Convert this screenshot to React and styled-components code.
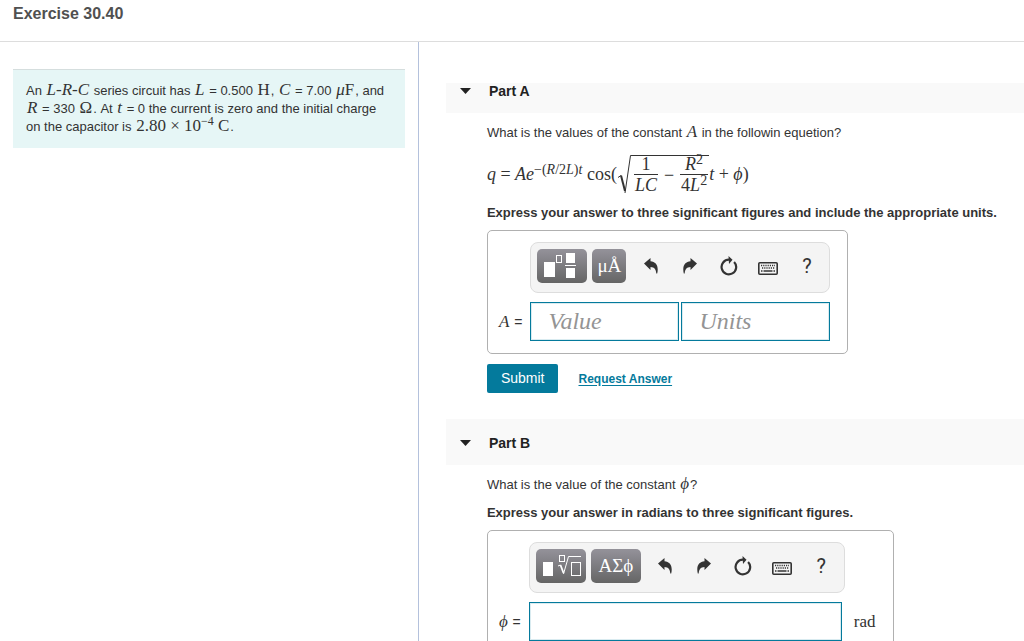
import React from "react";
import styled, { createGlobalStyle } from "styled-components";

const GlobalStyle = createGlobalStyle`
	*, *::before, *::after {
		box-sizing: border-box;
	}
	body {
		margin: 0;
		overflow: hidden;
		background: #fff;
		color: #333;
		font: 13px/18px "Liberation Sans", Arial, sans-serif;
	}
	h1, h2, p {
		margin: 0;
	}
	button, input {
		font: inherit;
		color: inherit;
	}
`;

const Page = styled.div`
	display: flex;
	flex-direction: column;
	height: 100vh;
`;

const PageHeader = styled.header`
	padding: 4px 13px 17px;
	border-bottom: 1px solid #ddd;
`;

const PageTitle = styled.h1`
	font-size: 16px;
	line-height: 20px;
	color: #505050;
`;

const Columns = styled.div`
	display: grid;
	grid-template-columns: minmax(0, 9fr) minmax(0, 13fr);
	flex: 1;
	min-height: 0;
`;

const ProblemPane = styled.section`
	padding: 27px 13px 0;
	border-right: 1px solid #b4c1dc;
`;

const ProblemText = styled.p`
	padding: 12px 13px;
	border-top: 1px solid #d5dede;
	background: #e6f6f6;
`;

const PartsPane = styled.main`
	min-width: 0;
	padding: 41px 0 0 27px;
	overflow: hidden;
`;

const PartHeader = styled.div`
	display: flex;
	align-items: center;
	gap: 18px;
	padding: ${(props) => (props.$first ? "0 14px 14px" : "16px 14px 14px")};
	background: #f9f9f9;
`;

const ToggleButton = styled.button`
	display: flex;
	padding: 0;
	border: 0;
	background: none;
	color: #222;
`;

const PartTitle = styled.h2`
	font-size: 14px;
	line-height: 16px;
	color: #222;
`;

const PartBody = styled.div`
	display: flex;
	flex-direction: column;
	align-items: flex-start;
	padding: 11px 0 26px 41px;
`;

const Instruction = styled.p`
	margin: 10px 0 8px;
	font-weight: bold;
	white-space: nowrap;
`;

const Math = styled.span`
	margin: 0 1px;
	font-family: "Liberation Serif", "Times New Roman", serif;
	font-size: 17px;
	line-height: 16px;
	white-space: nowrap;
	sup {
		font-size: 12px;
		line-height: 0;
		vertical-align: 6px;
	}
`;

const NoWrap = styled.span`
	white-space: nowrap;
`;

const Formula = styled.div`
	display: flex;
	align-items: center;
	margin-top: 12px;
	height: 40px;
	font-family: "Liberation Serif", "Times New Roman", serif;
	font-size: 18px;
	line-height: 20px;
	white-space: pre;
	sup {
		font-size: 14px;
		line-height: 0;
		vertical-align: 6px;
	}
`;

const RadicalSign = styled.svg`
	display: block;
	width: 14px;
	height: 39px;
`;

const Radicand = styled.span`
	display: flex;
	align-items: center;
	gap: 6px;
	height: 39px;
	padding: 0 1px 0 3px;
	border-top: 1px solid #333;
`;

const Fraction = styled.span`
	display: flex;
	flex-direction: column;
	text-align: center;
	span {
		padding: 0 1px;
	}
	span:first-child {
		border-bottom: 1px solid #333;
	}
`;

const AnswerBox = styled.form`
	display: grid;
	grid-template-columns: auto auto auto;
	align-items: center;
	row-gap: 9px;
	padding: 11px 17px 12px 10px;
	border: 1px solid #b0b0b0;
	border-radius: 5px;
`;

const Toolbar = styled.div`
	display: flex;
	align-items: center;
	grid-column: 2;
	height: 51px;
	padding: 0 3px 3px 6px;
	border: 1px solid #ddd;
	border-radius: 8px;
	background: #f4f4f4;
`;

const PaletteButton = styled.button`
	display: flex;
	align-items: center;
	justify-content: center;
	width: ${(props) => (props.$narrow ? "34px" : "50px")};
	height: 34px;
	margin-right: 5px;
	padding: 0;
	border: 0;
	border-radius: 5px;
	background: linear-gradient(#94929a, #656565);
	color: #fff;
	font-family: "Liberation Serif", "Times New Roman", serif;
	font-size: 19px;
`;

const IconGroup = styled.div`
	display: flex;
`;

const IconButton = styled.button`
	display: flex;
	align-items: center;
	justify-content: center;
	width: 39px;
	height: 34px;
	padding: 0;
	border: 0;
	background: none;
	color: #333;
	font-family: Roboto, sans-serif;
	font-size: 20px;
`;

const AnswerLabel = styled.label`
	grid-column: 1;
	margin-right: 8px;
	font-size: 14px;
	white-space: nowrap;
`;

const Fields = styled.div`
	display: flex;
	gap: 2px;
`;

const Unit = styled(Math)`
	margin-left: 9px;
	margin-right: 0;
`;

const AnswerInput = styled.input`
	width: ${(props) => (props.$wide ? "313px" : "149px")};
	height: 39px;
	padding: 0 17px;
	border: 1px solid #047a9c;
	box-shadow: inset 0 0 0 1px #d9ebf0;
	background: #fff;
	font-family: "Liberation Serif", "Times New Roman", serif;
	font-size: 24px;
	&::placeholder {
		color: #949494;
		font-style: italic;
		opacity: 1;
	}
`;

const Actions = styled.div`
	display: flex;
	align-items: center;
	gap: 20px;
	margin-top: 10px;
`;

const SubmitButton = styled.button`
	padding: 5px 14px 6px;
	border: 0;
	border-radius: 2px;
	background: #047a9c;
	color: #fff;
	font-size: 14px;
`;

const RequestLink = styled.a`
	color: #047a9c;
	font-size: 12px;
	font-weight: bold;
	text-underline-offset: 2px;
`;

const UndoIcon = ({ flipped }) => (
	<svg width="14" height="16" viewBox="0 0 14 16" fill="currentColor">
		<path
			transform={flipped ? "matrix(-1 0 0 1 14 0)" : undefined}
			d="M0 5.500 6.500 0V3.200C12 3.500 15 8 13.200 15.500H12.300C12 11.500 10.500 9.300 6.500 9.100V12Z"
		/>
	</svg>
);

const ResetIcon = () => (
	<svg width="18" height="20" viewBox="0 0 18 20" fill="none">
		<path
			d="M14.100 5.900A7.300 7.300 0 1 1 9 3.700"
			stroke="currentColor"
			strokeWidth="2.200"
		/>
		<path d="M8.500 0 12.500 3.800 9 8Z" fill="currentColor" />
	</svg>
);

const KeyboardIcon = () => (
	<svg width="20" height="18" viewBox="0 0 20 18" fill="none" stroke="currentColor">
		<rect x=".8" y="5.800" width="18.400" height="11.400" rx="1" strokeWidth="1.600" />
		<path d="M3 8.500H17M4 11H17" strokeWidth="1.400" strokeDasharray="1.200 1" />
		<path d="M3 14H4.500M5.500 14H14.500M15.500 14H17" strokeWidth="1.600" />
	</svg>
);

const TemplatesIcon = () => (
	<svg width="36" height="30" viewBox="0 0 36 30" fill="#fff">
		<rect x="0" y="11" width="11" height="15" />
		<rect x="12.500" y="4.500" width="5" height="7" fill="none" stroke="#fff" />
		<rect x="22" y="2" width="9" height="10" />
		<rect x="21" y="14" width="11" height="1" />
		<rect x="22" y="17" width="9" height="10" />
	</svg>
);

const RootIcon = () => (
	<svg width="40" height="26" viewBox="0 0 40 26" fill="none" stroke="#fff">
		<rect x="2" y="9" width="10" height="14" fill="#fff" stroke="none" />
		<rect x="18.500" y="2.500" width="5" height="6" />
		<path d="M17 13 19.500 12" />
		<path d="M19.500 12 22.500 20" strokeWidth="1.800" />
		<path d="M22.500 21 27.500 3.500H40" />
		<rect x="30.500" y="9.500" width="9" height="13" />
	</svg>
);

const Radical = () => (
	<RadicalSign viewBox="0 0 14 39" fill="none" stroke="#333">
		<path d="M1 22.500 4 20.500" />
		<path d="M4 20.500 8 36" strokeWidth="2" />
		<path d="M8 38 13.500 .5H14" />
	</RadicalSign>
);

const Toggle = ({ label }) => (
	<ToggleButton type="button" aria-label={label}>
		<svg width="11" height="6" viewBox="0 0 11 6" fill="currentColor">
			<path d="M0 0H11L5.500 6Z" />
		</svg>
	</ToggleButton>
);

const HistoryButtons = () => (
	<IconGroup>
		<IconButton type="button" aria-label="Undo"><UndoIcon /></IconButton>
		<IconButton type="button" aria-label="Redo"><UndoIcon flipped /></IconButton>
		<IconButton type="button" aria-label="Reset"><ResetIcon /></IconButton>
		<IconButton type="button" aria-label="Keyboard shortcuts"><KeyboardIcon /></IconButton>
		<IconButton type="button" aria-label="Help">?</IconButton>
	</IconGroup>
);

const App = () => {
	return (
		<Page>
			<GlobalStyle />
			<PageHeader>
				<PageTitle>Exercise 30.40</PageTitle>
			</PageHeader>
			<Columns>
				<ProblemPane>
					<ProblemText>
						An <Math><i>L</i>-<i>R</i>-<i>C</i></Math> series circuit has{" "}
						<NoWrap><Math><i>L</i></Math> = 0.500 <Math>H</Math>,</NoWrap>{" "}
						<NoWrap><Math><i>C</i></Math> = 7.00 <Math><i>μ</i>F</Math>,</NoWrap> and{" "}
						<NoWrap><Math><i>R</i></Math> = 330 <Math>Ω</Math>.</NoWrap> At{" "}
						<NoWrap><Math><i>t</i></Math> = 0</NoWrap> the current is zero and the
						initial charge{" "}
						<NoWrap>on the capacitor is <Math>2.80 × 10<sup>−4</sup> C</Math>.</NoWrap>
					</ProblemText>
				</ProblemPane>
				<PartsPane>
					<PartHeader $first>
						<Toggle label="Toggle Part A" />
						<PartTitle>Part A</PartTitle>
					</PartHeader>
					<PartBody>
						<p>
							What is the values of the constant <Math><i>A</i></Math> in the followin
							equetion?
						</p>
						<Formula>
							<span>
								<i>q</i> = <i>Ae</i>
								<sup>−(<i>R</i>/2<i>L</i>)<i>t</i></sup> cos(
							</span>
							<Radical />
							<Radicand>
								<Fraction>
									<span>1</span>
									<span><i>LC</i></span>
								</Fraction>
								<span>−</span>
								<Fraction>
									<span><i>R</i><sup>2</sup></span>
									<span>4<i>L</i><sup>2</sup></span>
								</Fraction>
							</Radicand>
							<span><i>t</i> + <i>ϕ</i>)</span>
						</Formula>
						<Instruction>
							Express your answer to three significant figures and include the
							appropriate units.
						</Instruction>
						<AnswerBox id="part-a" onSubmit={(e) => e.preventDefault()}>
							<Toolbar>
								<PaletteButton type="button" aria-label="Templates"><TemplatesIcon /></PaletteButton>
								<PaletteButton type="button" $narrow>μÅ</PaletteButton>
								<HistoryButtons />
							</Toolbar>
							<AnswerLabel htmlFor="value-a"><Math><i>A</i></Math> =</AnswerLabel>
							<Fields>
								<AnswerInput id="value-a" placeholder="Value" />
								<AnswerInput aria-label="Units" placeholder="Units" />
							</Fields>
						</AnswerBox>
						<Actions>
							<SubmitButton type="submit" form="part-a">Submit</SubmitButton>
							<RequestLink href="#answer">Request Answer</RequestLink>
						</Actions>
					</PartBody>
					<PartHeader>
						<Toggle label="Toggle Part B" />
						<PartTitle>Part B</PartTitle>
					</PartHeader>
					<PartBody>
						<p>
							What is the value of the constant <Math><i>ϕ</i></Math>?
						</p>
						<Instruction>
							Express your answer in radians to three significant figures.
						</Instruction>
						<AnswerBox id="part-b" onSubmit={(e) => e.preventDefault()}>
							<Toolbar>
								<PaletteButton type="button" aria-label="Templates"><RootIcon /></PaletteButton>
								<PaletteButton type="button">ΑΣϕ</PaletteButton>
								<HistoryButtons />
							</Toolbar>
							<AnswerLabel htmlFor="value-b"><Math><i>ϕ</i></Math> =</AnswerLabel>
							<Fields>
								<AnswerInput id="value-b" $wide />
							</Fields>
							<Unit>rad</Unit>
						</AnswerBox>
					</PartBody>
				</PartsPane>
			</Columns>
		</Page>
	);
};

export default App;
